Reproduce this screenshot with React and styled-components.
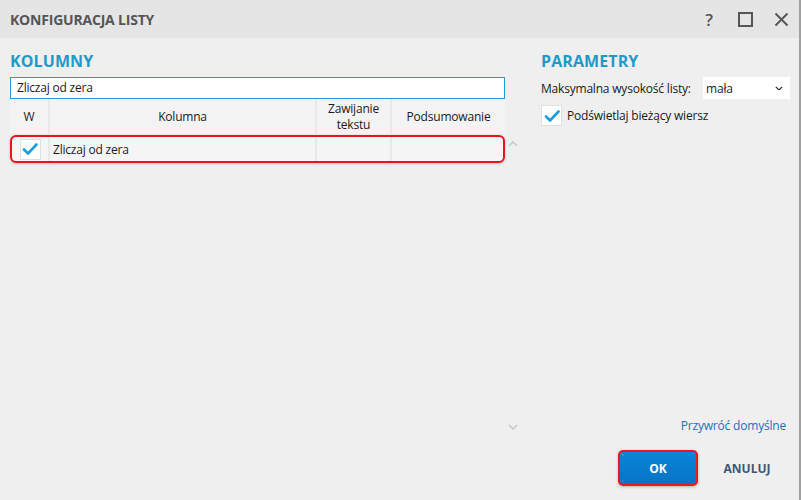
import React from "react";
import styled, { createGlobalStyle } from "styled-components";

const GlobalStyle = createGlobalStyle`
  html, body {
    margin: 0;
    padding: 0;
    background: #efefef;
  }
  body {
    font-family: "Open Sans", "Noto Sans", sans-serif;
    color: #1a1a1a;
  }
`;

const Dialog = styled.div`
  width: 801px;
  height: 500px;
  box-sizing: border-box;
  background: #efefef;
  border-right: 2px solid #a0a0a0;
  display: flex;
  flex-direction: column;
`;

const TitleBar = styled.div`
  height: 38px;
  flex-shrink: 0;
  background: #e5e5e5;
  display: flex;
  align-items: center;
  padding: 0 8px 0 10px;
`;

const Title = styled.div`
  flex: 1;
  font-size: 14px;
  font-weight: 700;
  color: #555;
  letter-spacing: -0.2px;
`;

const TitleIcons = styled.div`
  display: flex;
  align-items: center;
  gap: 16px;
`;

const IconButton = styled.div`
  width: 20px;
  height: 20px;
  display: flex;
  align-items: center;
  justify-content: center;
  color: #555;
  font-size: 17px;
  font-weight: 600;
`;

const Body = styled.div`
  flex: 1;
  display: grid;
  grid-template-columns: 511px 1fr;
  column-gap: 20px;
  padding: 13px 10px 14px 10px;
  min-height: 0;
`;

const Column = styled.div`
  display: flex;
  flex-direction: column;
  min-height: 0;
`;

const Heading = styled.div`
  font-size: 16px;
  font-weight: 700;
  color: #1f9ac7;
  line-height: 20px;
  margin-bottom: 6px;
  letter-spacing: 0.1px;
`;

const ListArea = styled.div`
  flex: 1;
  display: grid;
  grid-template-columns: 495px 1fr;
  min-height: 0;
`;

const ListMain = styled.div`
  display: flex;
  flex-direction: column;
`;

const SearchInput = styled.div`
  height: 22px;
  box-sizing: border-box;
  border: 1px solid #1e9be0;
  background: #fff;
  font-size: 12px;
  line-height: 20px;
  padding-left: 6px;
  letter-spacing: -0.2px;
`;

const TableGrid = styled.div`
  display: grid;
  grid-template-columns: 38px 267px 75px 1fr;
`;

const HeaderCell = styled.div`
  height: 35px;
  background: #f3f3f3;
  border-left: ${(p) => (p.$first ? "none" : "2px solid #e8e8e8")};
  display: flex;
  align-items: center;
  justify-content: center;
  text-align: center;
  font-size: 12px;
  line-height: 16px;
  letter-spacing: -0.2px;
`;

const Row = styled.div`
  grid-column: 1 / -1;
  display: grid;
  grid-template-columns: 36px 267px 75px 1fr;
  height: 28px;
  margin-top: 1px;
  box-sizing: border-box;
  border: 2px solid #e8141c;
  border-radius: 6px;
  background: #f5f5f5;
  box-shadow: 0 1px 3px rgba(0, 0, 0, 0.18);
  overflow: hidden;
`;

const Cell = styled.div`
  display: flex;
  align-items: center;
  justify-content: ${(p) => (p.$center ? "center" : "flex-start")};
  padding-left: ${(p) => (p.$center ? "0" : "3px")};
  border-left: ${(p) => (p.$first ? "none" : "2px solid #e8e8e8")};
  font-size: 12px;
  letter-spacing: -0.2px;
`;

const CheckBox = styled.div`
  width: 21px;
  height: 21px;
  box-sizing: border-box;
  background: #fff;
  border: 1px solid #e0e0e0;
  display: flex;
  align-items: center;
  justify-content: center;
  flex-shrink: 0;
`;

const ScrollGutter = styled.div`
  display: flex;
  flex-direction: column;
  justify-content: space-between;
  align-items: center;
  padding: 64px 0 56px 0;
`;

const Params = styled.div`
  display: flex;
  flex-direction: column;
  gap: 6px;
  flex: 1;
`;

const ParamRow = styled.div`
  display: flex;
  align-items: center;
  font-size: 12px;
  letter-spacing: -0.2px;
  gap: ${(p) => p.$gap || "0"};
`;

const Label = styled.span`
  flex: 1;
`;

const Select = styled.div`
  width: 87px;
  height: 22px;
  box-sizing: border-box;
  background: #fff;
  display: flex;
  align-items: center;
  justify-content: space-between;
  padding: 0 7px 0 3px;
  margin-right: -1px;
  font-size: 12px;
`;

const Spacer = styled.div`
  flex: 1;
`;

const LinkRow = styled.div`
  display: flex;
  justify-content: flex-end;
  margin-bottom: 16px;
  padding-right: 3px;
`;

const Link = styled.span`
  color: #1f6fb8;
  font-size: 12px;
  letter-spacing: -0.2px;
`;

const Buttons = styled.div`
  display: flex;
  justify-content: flex-end;
  gap: 12px;
  padding-right: 5px;
`;

const Button = styled.div`
  height: 36px;
  width: ${(p) => p.$width};
  box-sizing: border-box;
  display: flex;
  align-items: center;
  justify-content: center;
  font-size: 12px;
  font-weight: 700;
  border-radius: 5px;
  color: ${(p) => (p.$primary ? "#fff" : "#3b5877")};
  background: ${(p) =>
    p.$primary ? "linear-gradient(#0a85d9, #0674c6)" : "transparent"};
  border: ${(p) => (p.$primary ? "2px solid #ee1620" : "none")};
  box-shadow: ${(p) => (p.$primary ? "0 1px 3px rgba(0,0,0,0.25)" : "none")};
`;

const Check = ({ size = 16 }) => (
  <svg width={size} height={size} viewBox="0 0 16 16">
    <path
      d="M2 8.5 L6 12.5 L14.5 3.5"
      fill="none"
      stroke="#1b9ee0"
      strokeWidth="2.6"
      strokeLinecap="round"
      strokeLinejoin="round"
    />
  </svg>
);

const Chevron = ({ up, color = "#c5c5c5", size = 10 }) => (
  <svg width={size} height={size * 0.6} viewBox="0 0 10 6">
    <path
      d={up ? "M1 5 L5 1 L9 5" : "M1 1 L5 5 L9 1"}
      fill="none"
      stroke={color}
      strokeWidth="1.4"
    />
  </svg>
);

export default function App() {
  return (
    <Dialog>
      <GlobalStyle />
      <TitleBar>
        <Title>KONFIGURACJA LISTY</Title>
        <TitleIcons>
          <IconButton>?</IconButton>
          <IconButton>
            <svg width="15" height="15" viewBox="0 0 15 15">
              <rect x="1" y="1" width="13" height="13" fill="none" stroke="#555" strokeWidth="2" />
            </svg>
          </IconButton>
          <IconButton>
            <svg width="15" height="15" viewBox="0 0 15 15">
              <path d="M1.5 1.5 L13.5 13.5 M13.5 1.5 L1.5 13.5" stroke="#555" strokeWidth="1.9" />
            </svg>
          </IconButton>
        </TitleIcons>
      </TitleBar>

      <Body>
        <Column>
          <Heading>KOLUMNY</Heading>
          <ListArea>
            <ListMain>
              <SearchInput>Zliczaj od zera</SearchInput>
              <TableGrid>
                <HeaderCell $first>W</HeaderCell>
                <HeaderCell>Kolumna</HeaderCell>
                <HeaderCell>
                  Zawijanie
                  <br />
                  tekstu
                </HeaderCell>
                <HeaderCell>Podsumowanie</HeaderCell>
                <Row>
                  <Cell $first $center>
                    <CheckBox>
                      <Check />
                    </CheckBox>
                  </Cell>
                  <Cell>Zliczaj od zera</Cell>
                  <Cell />
                  <Cell />
                </Row>
              </TableGrid>
            </ListMain>
            <ScrollGutter>
              <Chevron up />
              <Chevron />
            </ScrollGutter>
          </ListArea>
        </Column>

        <Column>
          <Heading>PARAMETRY</Heading>
          <Params>
            <ParamRow>
              <Label>Maksymalna wysokość listy:</Label>
              <Select>
                <span>mała</span>
                <Chevron color="#222" size={8} />
              </Select>
            </ParamRow>
            <ParamRow $gap="5px">
              <CheckBox>
                <Check />
              </CheckBox>
              <span>Podświetlaj bieżący wiersz</span>
            </ParamRow>
            <Spacer />
          </Params>
          <LinkRow>
            <Link>Przywróć domyślne</Link>
          </LinkRow>
          <Buttons>
            <Button $primary $width="80px">OK</Button>
            <Button $width="74px">ANULUJ</Button>
          </Buttons>
        </Column>
      </Body>
    </Dialog>
  );
}
